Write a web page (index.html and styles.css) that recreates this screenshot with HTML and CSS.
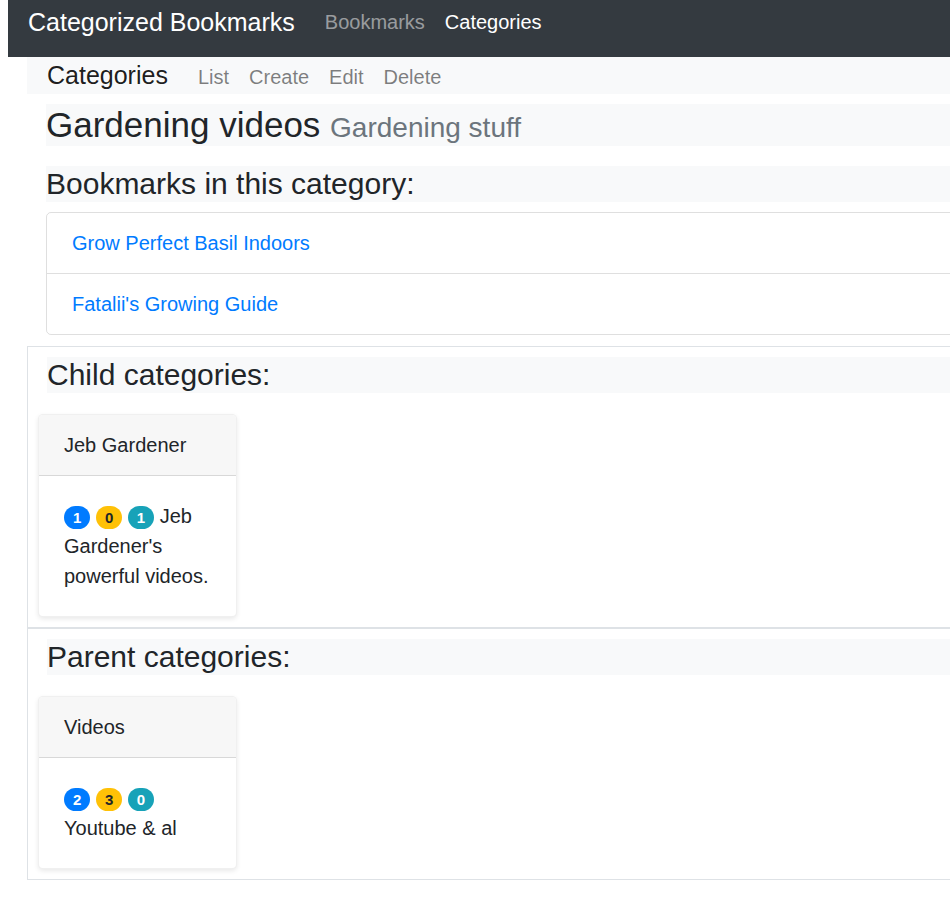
FILE: index.html
```html
<!DOCTYPE html>
<html lang="en">
<head>
<meta charset="utf-8">
<title>Categorized Bookmarks</title>
<link rel="stylesheet" href="styles.css">
</head>
<body>
<nav class="navbar">
  <a class="brand" href="#">Categorized Bookmarks</a>
  <a class="nav-link" href="#">Bookmarks</a>
  <a class="nav-link active" href="#">Categories</a>
</nav>
<div class="main">
  <nav class="subnav">
    <span class="subnav-brand">Categories</span>
    <a class="sub-link" href="#">List</a>
    <a class="sub-link" href="#">Create</a>
    <a class="sub-link" href="#">Edit</a>
    <a class="sub-link" href="#">Delete</a>
  </nav>
  <div class="content">
    <h3 class="title">Gardening videos <small class="muted">Gardening stuff</small></h3>
    <h4 class="section-title">Bookmarks in this category:</h4>
    <div class="list-group">
      <div class="list-item"><a href="#">Grow Perfect Basil Indoors</a></div>
      <div class="list-item"><a href="#">Fatalii's Growing Guide</a></div>
    </div>
  </div>
  <section class="box">
    <h4 class="section-title boxed">Child categories:</h4>
    <div class="card">
      <div class="card-header">Jeb Gardener</div>
      <div class="card-body"><span class="badge primary">1</span> <span class="badge warning">0</span> <span class="badge info">1</span> Jeb Gardener's powerful videos.</div>
    </div>
  </section>
  <section class="box">
    <h4 class="section-title boxed">Parent categories:</h4>
    <div class="card">
      <div class="card-header">Videos</div>
      <div class="card-body"><span class="badge primary">2</span> <span class="badge warning">3</span> <span class="badge info">0</span> Youtube &amp; al</div>
    </div>
  </section>
</div>
</body>
</html>
```
FILE: styles.css
```css
html, body {
  overflow: hidden;
}
body {
  margin: 0 0 0 8px;
  font-family: "Liberation Sans", Arial, sans-serif;
  font-size: 20px;
  line-height: 1.5;
  color: #212529;
  background: #fff;
}
a {
  text-decoration: none;
}
.navbar {
  height: 57px;
  box-sizing: border-box;
  background: #343a40;
  display: flex;
  align-items: flex-start;
  padding: 4px 0 0 20px;
}
.brand {
  font-size: 25px;
  line-height: 37.5px;
  color: #fff;
  margin-right: 20px;
}
.nav-link {
  margin-top: 3px;
  padding: 0 10px;
  line-height: 30px;
  color: rgba(255, 255, 255, 0.5);
}
.nav-link.active {
  color: #fff;
}
.main {
  margin-left: 19px;
  width: 1000px;
}
.subnav {
  background: #f8f9fa;
  height: 37px;
  display: flex;
  align-items: baseline;
  padding-left: 20px;
}
.subnav-brand {
  font-size: 25px;
  line-height: 37px;
  color: rgba(0, 0, 0, 0.9);
  margin-right: 20px;
}
.sub-link {
  padding: 0 10px;
  color: rgba(0, 0, 0, 0.5);
}
.content {
  padding: 0 19px;
}
.title {
  margin: 10px 0 20px;
  height: 42px;
  background: #f8f9fa;
  font-size: 35px;
  line-height: 42px;
  font-weight: normal;
}
.muted {
  font-size: 28px;
  line-height: 1;
  color: #6c757d;
}
.section-title {
  margin: 0 0 10px;
  background: #f8f9fa;
  font-size: 30px;
  line-height: 36px;
  font-weight: normal;
}
.list-group {
  border: 1px solid rgba(0, 0, 0, 0.125);
  border-radius: 5px;
}
.list-item {
  padding: 15px 25px;
}
.list-item + .list-item {
  border-top: 1px solid rgba(0, 0, 0, 0.125);
}
.list-item a {
  color: #007bff;
}
.box {
  border: 1px solid #dee2e6;
  padding: 10px;
}
.content + .box {
  margin-top: 11px;
}
.section-title.boxed {
  margin: 0 0 21px 9px;
}
.card {
  width: 199px;
  box-sizing: border-box;
  border: 1px solid rgba(0, 0, 0, 0.06);
  border-radius: 5px;
  box-shadow: 0 2px 5px rgba(0, 0, 0, 0.09);
  background: #fff;
}
.card-header {
  padding: 15px 25px;
  background: #f7f7f7;
  border-bottom: 1px solid rgba(0, 0, 0, 0.125);
  border-radius: 4px 4px 0 0;
}
.card-body {
  padding: 25px;
}
.badge {
  display: inline-block;
  font-size: 15px;
  font-weight: bold;
  line-height: 1;
  padding: 3.75px 9px;
  border-radius: 200px;
  vertical-align: baseline;
  text-align: center;
}
.badge.primary {
  background: #007bff;
  color: #fff;
}
.badge.warning {
  background: #ffc107;
  color: #212529;
}
.badge.info {
  background: #17a2b8;
  color: #fff;
}
```
